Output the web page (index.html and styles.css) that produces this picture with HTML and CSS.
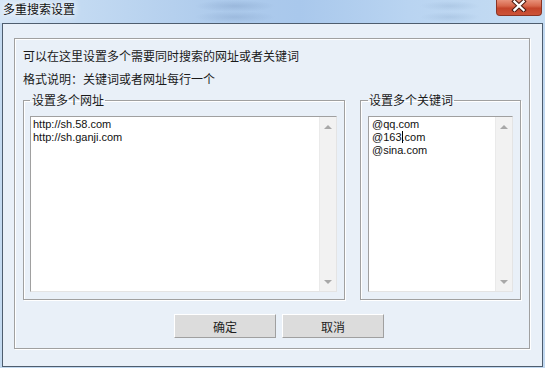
FILE: index.html
```html
<!DOCTYPE html>
<html lang="zh-CN">
<head>
    <meta charset="UTF-8">
    <meta name="viewport" content="width=device-width, initial-scale=1.0">
    <title>多重搜索设置</title>
    <link rel="stylesheet" href="styles.css">
</head>
<body>
    <div class="titlebar">
        <div class="title">多重搜索设置</div>
        <div class="close">
            <svg width="16" height="12" viewBox="0 0 16 12">
                <path d="M3.5 1.5 L12.5 10 M12.5 1.5 L3.5 10" stroke="#4a1a10" stroke-width="4.4" stroke-linecap="square"/>
                <path d="M3.5 1.5 L12.5 10 M12.5 1.5 L3.5 10" stroke="#fff" stroke-width="2.4" stroke-linecap="square"/>
            </svg>
        </div>
    </div>

    <div class="client">
        <div class="panel">
            <div class="line first">可以在这里设置多个需要同时搜索的网址或者关键词</div>
            <div class="line">格式说明：关键词或者网址每行一个</div>

            <div class="groups">
                <fieldset class="group group-urls">
                    <legend>设置多个网址</legend>
                    <div class="edit">
                        <div class="edit-text">http://sh.58.com<br>http://sh.ganji.com</div>
                        <div class="scroll">
                            <span class="arrow up"></span>
                            <span class="arrow down"></span>
                        </div>
                    </div>
                </fieldset>
                <fieldset class="group group-keys">
                    <legend>设置多个关键词</legend>
                    <div class="edit">
                        <div class="edit-text">@qq.com<br>@163<span class="caret"></span>.com<br>@sina.com</div>
                        <div class="scroll">
                            <span class="arrow up"></span>
                            <span class="arrow down"></span>
                        </div>
                    </div>
                </fieldset>
            </div>

            <div class="buttons">
                <button class="button">确定</button>
                <button class="button">取消</button>
            </div>
        </div>
    </div>
</body>
</html>
```

FILE: styles.css
```css
body {
    margin: 0;
    width: 545px;
    height: 368px;
    overflow: hidden;
    font-family: "Noto Sans CJK SC", "Liberation Sans", sans-serif;
    font-size: 12px;
    color: #1a1a1a;
    background: linear-gradient(to right, #c4daf0, #b7d1ee 50%, #c2d9f1);
}

.titlebar {
    height: 23px;
    display: flex;
    justify-content: space-between;
    align-items: flex-start;
    background:
        radial-gradient(ellipse 40px 6px at 235px 6px, rgba(120, 150, 190, 0.35), transparent),
        radial-gradient(ellipse 40px 6px at 235px 17px, rgba(120, 150, 190, 0.3), transparent),
        radial-gradient(ellipse 30px 5px at 450px 6px, rgba(130, 160, 195, 0.25), transparent),
        radial-gradient(ellipse 30px 5px at 450px 17px, rgba(130, 160, 195, 0.25), transparent),
        linear-gradient(to right, #d6e6f6 0%, #c3daf2 15%, #aecbec 40%, #a9c8ec 55%, #b9d4f1 75%, #c6ddf3 100%);
}

.title {
    padding: 2px 0 0 3px;
    line-height: 14px;
    color: #111;
    text-shadow: 0 0 6px #fff, 0 0 10px #fff;
}

.close {
    width: 44px;
    height: 15px;
    margin-right: 3px;
    border: 1px solid #8a3424;
    border-top: none;
    border-radius: 0 0 4px 4px;
    background: linear-gradient(to bottom, #e8917a 0%, #d7664b 40%, #c4442a 55%, #cc5338 100%);
    display: flex;
    justify-content: center;
    align-items: flex-start;
}

.client {
    margin: 0 2px 0 2px;
    height: 344px;
    box-sizing: border-box;
    border: 1px solid #4e5d6e;
    background-color: #e9f0f8;
    padding: 14px 11px 17px 11px;
    display: flex;
}

.panel {
    flex: 1;
    border: 1px solid #a0a0a0;
    box-shadow: 1px 1px 0 #fff, inset 1px 1px 0 #fff;
    padding: 0 7px 0 8px;
    margin-right: 1px;
}

.line {
    line-height: 16px;
    margin-top: 7px;
}

.line.first {
    margin-top: 9px;
}

.groups {
    display: flex;
    gap: 15px;
    margin-top: 6px;
}

.group {
    margin: 0;
    border: 1px solid #a0a0a0;
    box-shadow: 1px 1px 0 #fff, inset 1px 1px 0 #fff;
    padding: 9px 7px 7px 6px;
    min-width: 0;
}

.group-urls {
    width: 322px;
    box-sizing: border-box;
}

.group-keys {
    width: 161px;
    box-sizing: border-box;
    padding-left: 7px;
}

.group legend {
    padding: 0 1px 0 2px;
    line-height: 14px;
}

.group-keys legend {
    padding-left: 1px;
}

.edit {
    height: 176px;
    box-sizing: border-box;
    background-color: #fff;
    border: 1px solid #a0a0a0;
    border-right-color: #e4e4e4;
    border-bottom-color: #e4e4e4;
    display: flex;
}

.edit-text {
    flex: 1;
    padding: 1px 2px;
    font-family: "Liberation Sans", sans-serif;
    font-size: 11px;
    line-height: 13px;
    color: #111;
}

.group-keys .edit-text {
    padding-left: 3px;
}

.caret {
    display: inline-block;
    width: 1px;
    height: 12px;
    background-color: #000;
    vertical-align: -2px;
    margin-right: -1px;
}

.scroll {
    width: 16px;
    background-color: #f2f2f2;
    border-left: 1px solid #eaeaea;
    display: flex;
    flex-direction: column;
    justify-content: space-between;
    align-items: center;
    padding: 8px 0 7px;
}

.arrow {
    width: 0;
    height: 0;
    border-left: 4px solid transparent;
    border-right: 4px solid transparent;
}

.arrow.up {
    border-bottom: 4px solid #a8a8a8;
}

.arrow.down {
    border-top: 4px solid #a8a8a8;
}

.buttons {
    display: flex;
    gap: 6px;
    padding-left: 151px;
    margin-top: 14px;
}

.button {
    width: 102px;
    height: 24px;
    padding: 0;
    font-family: "Noto Sans CJK SC", sans-serif;
    font-size: 12px;
    color: #1e1e1e;
    background-color: #dcdcdc;
    border: 1px solid #a0a0a0;
    border-top-color: #fff;
    border-left-color: #fff;
}
```
